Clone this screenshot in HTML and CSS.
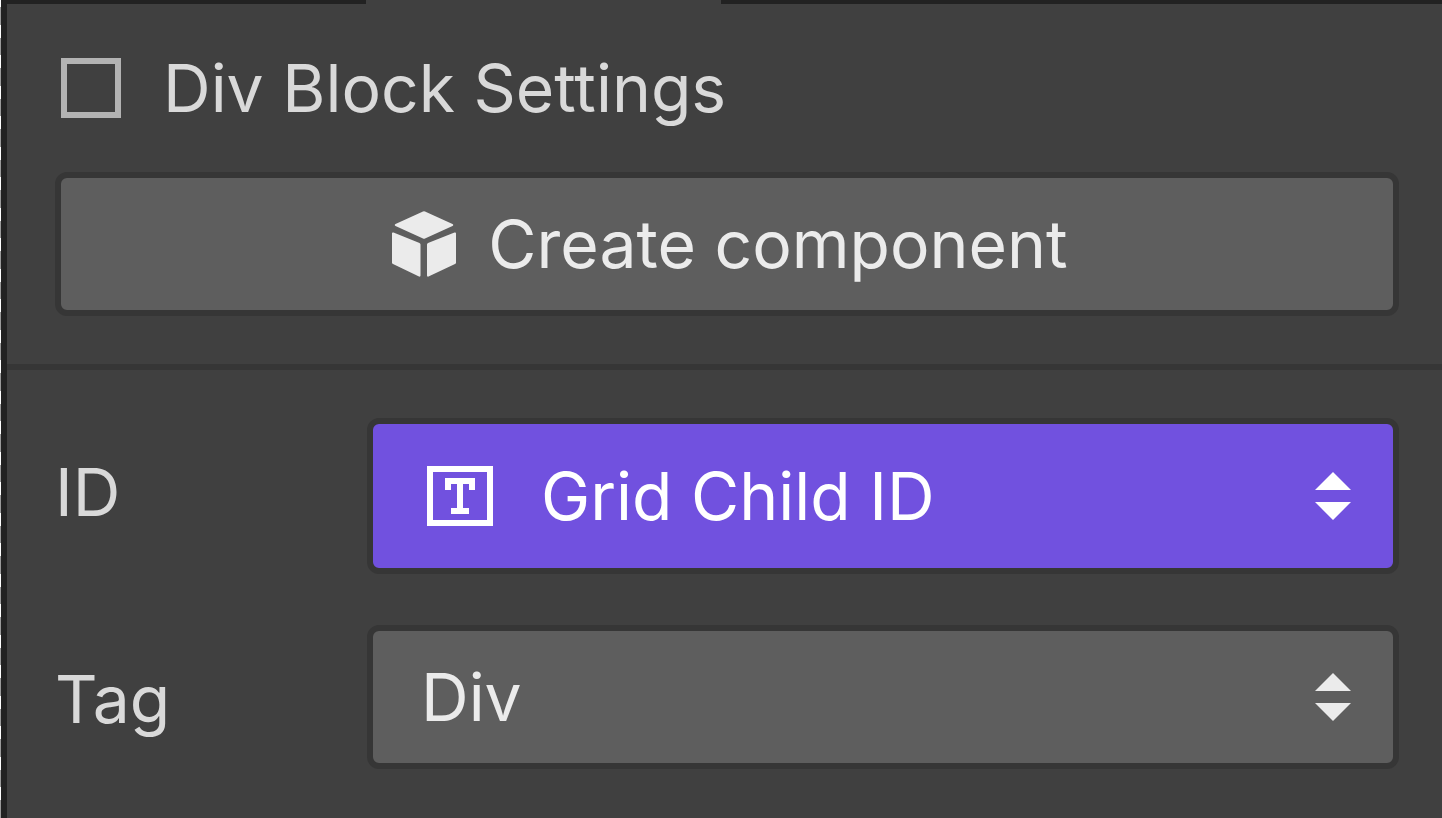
FILE: index.html
```html
<!DOCTYPE html>
<html lang="en">

<head>
    <meta charset="UTF-8">
    <meta name="viewport" content="width=device-width, initial-scale=1.0">
    <title>Div Block Settings</title>
    <link rel="stylesheet" href="styles.css">
</head>

<body>
    <div class="canvas-edge"></div>

    <main class="panel">
        <!-- Strip under the tabs, open below the active one -->
        <div class="tab-line">
            <span class="tab-active"></span>
        </div>

        <section class="section">
            <h1 class="title">
                <svg class="block-icon" viewBox="0 0 60 60" aria-hidden="true">
                    <rect x="3" y="3" width="54" height="54" fill="none" stroke="currentColor" stroke-width="6" />
                </svg>
                Div Block Settings
            </h1>
            <button type="button" class="create-button">
                <svg class="cube-icon" viewBox="0 0 64 66" aria-hidden="true">
                    <path d="M31 .4q1-.5 2 0l27.500 12.600q1.500 1 0 2L33 27.400q-1 .5-2 0L3.500 15q-1.500-1 0-2z" />
                    <path d="M0 22.500q0-1.500 1.500-.9L27.500 32q1 .5 1 1.500v31q0 1.500-1.500 1L1 53q-1-.5-1-1.500z" />
                    <path d="M64 22.500q0-1.500-1.500-.9L36 32q-1 .5-1 1.500v31q0 1.500 1.500 1L63 53q1-.5 1-1.500z" />
                </svg>
                Create component
            </button>
        </section>

        <section class="section fields">
            <div class="field">
                <label for="element-id">ID</label>
                <div class="select-wrap bound">
                    <svg class="text-icon" viewBox="0 0 66 60" aria-hidden="true">
                        <rect x="3" y="3" width="60" height="54" fill="none" stroke="currentColor" stroke-width="6" />
                        <path d="M18 12h30v12h-6v-6h-6v24h6v6H24v-6h6V18h-6v6h-6z" fill="currentColor" />
                    </svg>
                    <select id="element-id">
                        <option>Grid Child ID</option>
                    </select>
                    <svg class="arrows" viewBox="0 0 36 48" aria-hidden="true">
                        <path d="M18 0l18 18H0zM0 30h36L18 48z" />
                    </svg>
                </div>
            </div>
            <div class="field">
                <label for="element-tag">Tag</label>
                <div class="select-wrap">
                    <select id="element-tag">
                        <option>Div</option>
                    </select>
                    <svg class="arrows" viewBox="0 0 36 48" aria-hidden="true">
                        <path d="M18 0l18 18H0zM0 30h36L18 48z" />
                    </svg>
                </div>
            </div>
        </section>
    </main>
</body>

</html>
```

FILE: styles.css
```css
* {
    box-sizing: border-box;
}

body {
    margin: 0;
    min-height: 100vh;
    display: flex;
    background-color: #404040;
    color: #d9d9d9;
    font-family: Inter, sans-serif;
    font-size: 66px;
    line-height: 84px;
}

/* Dashed edge of the page canvas */
.canvas-edge {
    width: 1px;
    background: repeating-linear-gradient(#fff 0 7px, #999 7px 25px, #fff 25px 38px, #999 38px 55px, #fff 55px 61px);
}

.panel {
    flex: 1;
    min-width: 0;
    border-left: 6px solid #222;
}

.tab-line {
    height: 4px;
    padding-left: 25%;
    background-color: #222;
}

.tab-active {
    display: block;
    width: 33%;
    height: 4px;
    background-color: #404040;
}

.section {
    padding: 42px 43px 48px 48px;
}

.title {
    display: flex;
    align-items: center;
    gap: 42px;
    margin: 0 0 42px;
    padding-left: 6px;
    font-size: 66px;
    font-weight: 400;
}

.block-icon {
    width: 60px;
    height: 60px;
    color: #b3b3b3;
}

.create-button {
    display: flex;
    align-items: center;
    justify-content: center;
    gap: 32px;
    width: 100%;
    height: 144px;
    padding: 0 0 0 6px;
    border: 6px solid #363636;
    border-radius: 12px;
    background-color: #5e5e5e;
    color: #ebebeb;
    font: inherit;
}

.cube-icon {
    width: 64px;
    height: 66px;
    fill: currentColor;
}

.fields {
    display: grid;
    gap: 51px;
    padding-top: 48px;
    border-top: 6px solid #363636;
}

.field {
    display: grid;
    grid-template-columns: 312px 1fr;
    align-items: start;
}

.field label {
    padding-top: 32px;
}

/* Icons sit over the native select */
.select-wrap {
    position: relative;
    color: #ebebeb;
}

.select-wrap select {
    display: block;
    appearance: none;
    width: 100%;
    height: 144px;
    padding: 0 96px 0 48px;
    border: 6px solid #363636;
    border-radius: 12px;
    background-color: #5e5e5e;
    color: inherit;
    font: inherit;
}

.select-wrap.bound {
    color: #fff;
}

.bound select {
    height: 156px;
    padding-left: 168px;
    background-color: #7151df;
}

.text-icon {
    position: absolute;
    left: 60px;
    top: 48px;
    width: 66px;
    height: 60px;
    pointer-events: none;
}

.arrows {
    position: absolute;
    right: 48px;
    top: calc(50% - 24px);
    width: 36px;
    height: 48px;
    fill: currentColor;
    pointer-events: none;
}
```
